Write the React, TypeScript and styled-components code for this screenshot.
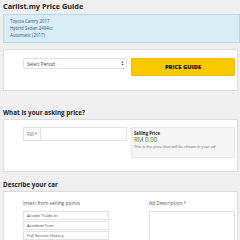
import React from "react";
import styled, { createGlobalStyle } from "styled-components";

const Global = createGlobalStyle`
  html, body { margin: 0; padding: 0; background: #efefef; }
  body { font-family: "Open Sans", "Liberation Sans", sans-serif; color: #333; overflow: hidden; }
  * { box-sizing: border-box; }
`;

const Page = styled.div`
  width: 240px;
  padding: 0 2px 0 3px;
`;

const PageTitle = styled.h1`
  margin: 0;
  height: 14px;
  display: flex;
  align-items: center;
  font-size: 7.3px;
  font-weight: 700;
  color: #222;
  padding-bottom: 2px;
`;

const InfoBox = styled.div`
  background: #d9edf7;
  border: 1px solid #b5d9ec;
  height: 29px;
  padding: 0 6px;
  display: flex;
  flex-direction: column;
  justify-content: center;
  gap: 2px;
  margin-right: -2px;
`;

const InfoLine = styled.div`
  font-size: 4.4px;
  line-height: 5px;
  color: #31557f;
`;

const Panel = styled.div<{ $h: number; $top: number; $pad: number }>`
  background: #fff;
  border: 1px solid #dcdcdc;
  height: ${(p) => p.$h}px;
  margin-top: ${(p) => p.$top}px;
  padding: ${(p) => p.$pad}px 3px 0 19px;
`;

const Row = styled.div`
  display: grid;
  grid-template-columns: 104px 104px;
  column-gap: 4px;
  align-items: start;
`;

const SelectBox = styled.div`
  height: 11px;
  border: 1px solid #e0e0e0;
  border-radius: 1px;
  background: #fff;
  display: flex;
  align-items: center;
  justify-content: space-between;
  padding: 0 2px 0 3px;
  font-size: 4.6px;
  color: #444;
`;

const Arrows = styled.svg`
  width: 3px;
  height: 5px;
`;

const YellowButton = styled.button`
  height: 18px;
  background: #fcc800;
  border: 1px solid #f0bd00;
  border-radius: 1px;
  font-family: "Open Sans", "Liberation Sans", sans-serif;
  font-weight: 800;
  font-size: 5.8px;
  color: #111;
  padding: 0;
`;

const SectionTitle = styled.h2<{ $top: number }>`
  margin: ${(p) => p.$top}px 0 0 0;
  height: 12px;
  display: flex;
  align-items: center;
  font-size: 6.3px;
  font-weight: 700;
  color: #222;
`;

const PriceInput = styled.div`
  height: 14px;
  border: 1px solid #e0e0e0;
  display: flex;
  align-items: stretch;
`;

const Addon = styled.div`
  width: 17px;
  border-right: 1px solid #e0e0e0;
  background: #fafafa;
  display: flex;
  align-items: center;
  padding-left: 3px;
  font-size: 4.4px;
  color: #888;
`;

const Req = styled.span`
  color: #e04848;
  margin-left: 1px;
`;

const Well = styled.div`
  height: 31px;
  background: #f5f5f5;
  border: 1px solid #e6e6e6;
  padding: 3px 2px;
  display: flex;
  flex-direction: column;
`;

const WellLabel = styled.div`
  font-size: 4.3px;
  font-weight: 700;
  color: #222;
  line-height: 5px;
`;

const WellPrice = styled.div`
  font-size: 6.2px;
  color: #2f8a2f;
  line-height: 8px;
`;

const WellNote = styled.div`
  font-size: 3.9px;
  color: #666;
  line-height: 5px;
`;

const DescRow = styled.div`
  display: grid;
  grid-template-columns: 86px 86px;
  column-gap: 40px;
`;

const FieldLabel = styled.div`
  font-size: 4.9px;
  color: #555;
  height: 8px;
  display: flex;
  align-items: center;
  margin-bottom: 4px;
`;

const PointsList = styled.div`
  display: flex;
  flex-direction: column;
  gap: 1px;
`;

const Point = styled.div`
  height: 9px;
  border: 1px solid #e2e2e2;
  display: flex;
  align-items: center;
  padding-left: 3px;
  font-size: 4.2px;
  color: #444;
`;

const TextArea = styled.div`
  height: 40px;
  border: 1px solid #dcdcdc;
  background: #fff;
`;

export default function App() {
  return (
    <>
      <Global />
      <Page>
        <PageTitle>Carlist.my Price Guide</PageTitle>
        <InfoBox>
          <InfoLine>Toyota Camry 2017</InfoLine>
          <InfoLine>Hybrid Sedan 2494cc</InfoLine>
          <InfoLine>Automatic (2017)</InfoLine>
        </InfoBox>
        <Panel $h={42} $top={6} $pad={8}>
          <Row>
            <SelectBox>
              <span>Select Period</span>
              <Arrows viewBox="0 0 3 5">
                <path d="M1.5 0.3 L2.6 1.9 L0.4 1.9 Z M1.5 4.7 L2.6 3.1 L0.4 3.1 Z" fill="#555" />
              </Arrows>
            </SelectBox>
            <YellowButton>PRICE GUIDE</YellowButton>
          </Row>
        </Panel>
        <SectionTitle $top={15}>What is your asking price?</SectionTitle>
        <Panel $h={53} $top={1} $pad={7}>
          <Row>
            <PriceInput>
              <Addon>
                RM<Req>*</Req>
              </Addon>
            </PriceInput>
            <Well>
              <WellLabel>Selling Price</WellLabel>
              <WellPrice>RM 0.00</WellPrice>
              <WellNote>This is the price that will be shown in your ad</WellNote>
            </Well>
          </Row>
        </Panel>
        <SectionTitle $top={6}>Describe your car</SectionTitle>
        <Panel $h={60} $top={1} $pad={7}>
          <DescRow>
            <div>
              <FieldLabel>Insert from selling points</FieldLabel>
              <PointsList>
                <Point>Accept Trade-in</Point>
                <Point>Accident Free</Point>
                <Point>Full Service History</Point>
              </PointsList>
            </div>
            <div>
              <FieldLabel>
                Ad Description<Req>*</Req>
              </FieldLabel>
              <TextArea />
            </div>
          </DescRow>
        </Panel>
      </Page>
    </>
  );
}
